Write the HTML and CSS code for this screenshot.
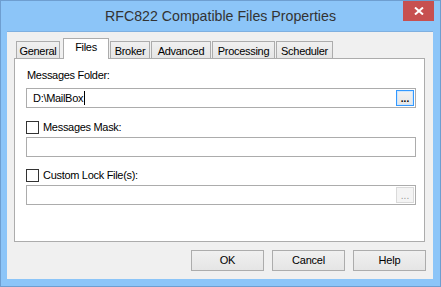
FILE: index.html
```html
<!DOCTYPE html>
<html>
<head>
<meta charset="utf-8">
<link rel="stylesheet" href="styles.css">
</head>
<body>
<div class="window">
  <div class="titlebar">
    <span class="title">RFC822 Compatible Files Properties</span>
    <div class="close">
      <svg width="10" height="8" viewBox="0 0 10 8"><path d="M1 0.5 L9 7.5 M9 0.5 L1 7.5" stroke="#fff" stroke-width="2" fill="none"/></svg>
    </div>
  </div>
  <div class="client">
    <div class="tabs">
      <div class="tab t-general">General</div>
      <div class="tab active t-files">Files</div>
      <div class="tab t-broker">Broker</div>
      <div class="tab t-advanced">Advanced</div>
      <div class="tab t-processing">Processing</div>
      <div class="tab t-scheduler">Scheduler</div>
    </div>
    <div class="panel">
      <div class="label">Messages Folder:</div>
      <div class="field">
        <span class="value">D:\MailBox<span class="caret"></span></span>
        <div class="browse focused"><span class="dots">...</span></div>
      </div>
      <div class="check-row first">
        <span class="checkbox"></span><span class="label">Messages Mask:</span>
      </div>
      <div class="field"></div>
      <div class="check-row">
        <span class="checkbox"></span><span class="label">Custom Lock File(s):</span>
      </div>
      <div class="field">
        <span class="value"></span>
        <div class="browse disabled"><span class="dots">...</span></div>
      </div>
    </div>
    <div class="buttons">
      <div class="btn">OK</div>
      <div class="btn">Cancel</div>
      <div class="btn">Help</div>
    </div>
  </div>
</div>
</body>
</html>
```
FILE: styles.css
```css
* { box-sizing: border-box; }
html, body { margin: 0; padding: 0; }
body {
  width: 441px;
  height: 287px;
  overflow: hidden;
  font-family: "Liberation Sans", Arial, sans-serif;
  font-size: 11px;
  color: #000;
}
.window {
  width: 441px;
  height: 287px;
  background: #8cc5f8;
  border: 1px solid #6e9ed0;
  padding: 0 7px 7px 6px;
  display: flex;
  flex-direction: column;
  position: relative;
}
.titlebar {
  height: 30px;
  flex: none;
  display: flex;
  align-items: center;
  justify-content: center;
}
.title {
  font-size: 14.2px;
  color: #333;
  margin-top: 0px;
  padding-left: 1px;
}
.close {
  position: absolute;
  top: 0;
  right: 6px;
  width: 31px;
  height: 20px;
  background: #c75050;
  display: flex;
  align-items: center;
  justify-content: center;
}
.close svg { display: block; margin-left: 1px; }
.client {
  flex: 1;
  background: #f0f0f0;
  border-top: 1px solid #7fb0e0;
  padding: 6px 7px 0 7px;
  display: flex;
  flex-direction: column;
}
.tabs {
  display: flex;
  align-items: flex-end;
  height: 20px;
  margin-left: 2px;
  gap: 1px;
}
.tab {
  height: 17px;
  border: 1px solid #acacac;
  border-bottom: none;
  background: linear-gradient(#f0f0f0, #e5e5e5);
  letter-spacing: -0.3px;
  display: flex;
  align-items: center;
  justify-content: center;
  padding-top: 1px;
  white-space: nowrap;
}
.tab.active {
  height: 21px;
  margin-bottom: -1px;
  margin-left: 2px;
  background: #fff;
  position: relative;
  z-index: 1;
  align-items: flex-start;
  padding-top: 2px;
}
.t-general { width: 44px; }
.t-files { width: 46px; }
.t-broker { width: 40px; }
.t-advanced { width: 60px; }
.t-processing { width: 63px; }
.t-scheduler { width: 57px; }
.panel {
  width: 411px;
  height: 184px;
  background: #fff;
  border: 1px solid #acacac;
  padding: 10px 8px 0 11px;
  display: flex;
  flex-direction: column;
}
.label {
  letter-spacing: -0.3px;
  line-height: 13px;
  height: 13px;
  color: #000;
}
.panel > .label { margin-bottom: 6px; margin-left: 1px; }
.field {
  height: 20px;
  border: 1px solid #acacac;
  background: #fff;
  display: flex;
  align-items: center;
  justify-content: space-between;
  padding: 0 1px 0 6px;
}
.value {
  letter-spacing: -0.3px;
  display: flex;
  align-items: center;
}
.caret {
  display: inline-block;
  width: 1px;
  height: 14px;
  background: #000;
  margin-left: 1px;
}
.browse {
  width: 18px;
  height: 16px;
  border: 1px solid #acacac;
  background: linear-gradient(#f2f2f2, #e6e6e6);
  display: flex;
  align-items: flex-end;
  justify-content: center;
  padding-bottom: 2px;
  font-size: 10px;
  line-height: 8px;
}
.browse.focused {
  border: 1px solid #3399ff;
  box-shadow: inset 0 0 0 1px #cfe6fc;
}
.browse.disabled {
  border-color: #dadada;
  background: #f4f4f4;
  color: #9a9a9a;
}
.dots { letter-spacing: 0; font-weight: bold; }
.browse.disabled .dots { font-weight: normal; }
.check-row {
  display: flex;
  align-items: center;
  gap: 4px;
  height: 13px;
  margin-top: 12px;
  margin-bottom: 3px;
}
.check-row.first { margin-top: 13px; }
.checkbox {
  width: 13px;
  height: 13px;
  border: 1px solid #333;
  background: #fff;
  flex: none;
}
.buttons {
  display: flex;
  justify-content: flex-end;
  gap: 8px;
  margin-top: 8px;
  padding-right: 0px;
}
.btn {
  width: 73px;
  height: 21px;
  border: 1px solid #acacac;
  background: linear-gradient(#f0f0f0, #e5e5e5);
  display: flex;
  align-items: center;
  justify-content: center;
  letter-spacing: -0.2px;
  padding-bottom: 1px;
}
```
